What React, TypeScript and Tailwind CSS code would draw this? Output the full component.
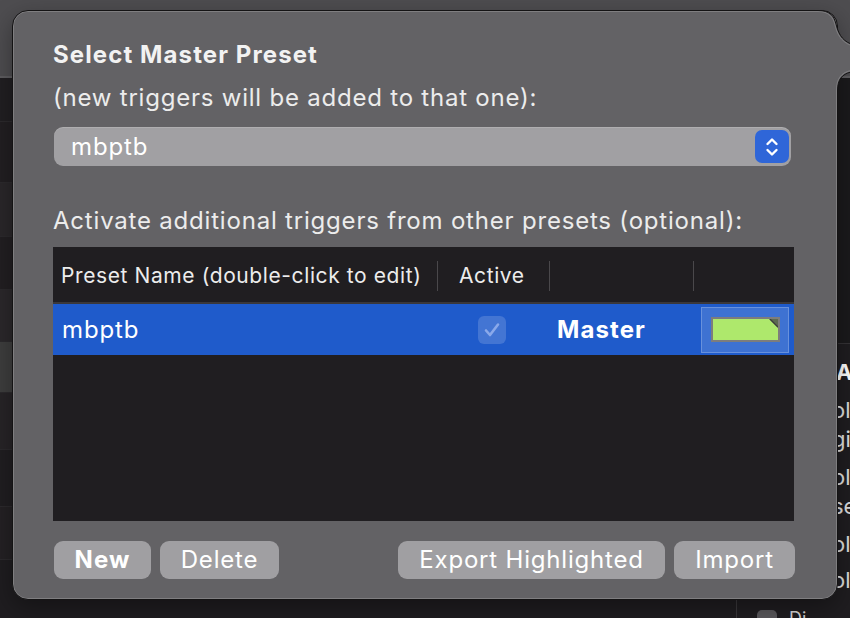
import React from "react";

const leftRows: { h: number; c: string }[] = [
  { h: 44, c: "#211f22" },
  { h: 61, c: "#221f22" },
  { h: 54, c: "#2a272a" },
  { h: 53, c: "#221f22" },
  { h: 52, c: "#2b282b" },
  { h: 51, c: "#3e3e3e" },
  { h: 57, c: "#272427" },
  { h: 57, c: "#201e21" },
  { h: 53, c: "#242124" },
];

function Stepper() {
  return (
    <div className="w-[34px] h-[33px] rounded-[7px] bg-[#2f66d8] flex items-center justify-center">
      <svg width="16" height="24" viewBox="0 0 16 24" fill="none">
        <path d="M3.5 9 L8 4.5 L12.5 9" stroke="white" strokeWidth="2.4" strokeLinecap="round" strokeLinejoin="round" />
        <path d="M3.5 15 L8 19.5 L12.5 15" stroke="white" strokeWidth="2.4" strokeLinecap="round" strokeLinejoin="round" />
      </svg>
    </div>
  );
}

function Btn({ label, bold, w }: { label: string; bold?: boolean; w: string }) {
  return (
    <div
      className={`${w} h-[38px] rounded-[9px] bg-[#a09fa2] flex items-center justify-center text-[24px] text-white ${
        bold ? "font-bold tracking-[1.1px]" : "tracking-[0.8px]"
      }`}
    >
      {label}
    </div>
  );
}

export default function App() {
  return (
    <div className="relative w-[850px] h-[618px] overflow-hidden bg-[#1f1d20] font-['Inter',sans-serif]">
      {/* background window */}
      <div className="h-[78px] bg-[#4e4d50] border-b-2 border-[#5e5d60]" />
      <div className="flex h-[540px]">
        <div className="w-[737px] shrink-0 flex flex-col border-r border-[#3a383b]">
          {leftRows.map((r, i) => (
            <div key={i} className="border-b border-[#2c2a2d]" style={{ height: r.h, background: r.c }} />
          ))}
        </div>
        <div className="flex-1 flex flex-col">
          <div className="h-[266px] bg-[#1b1a1c] border-b border-[#353336]" />
          <div className="pl-[95px] pt-[14px] text-[22px] leading-[29px] text-[#e0e0e0] whitespace-nowrap">
            <div className="font-bold text-white pl-[4px]">A</div>
            <div className="mt-[9px]">ol</div>
            <div>gi</div>
            <div className="mt-[9px]">ol</div>
            <div>se</div>
            <div className="mt-[9px]">ol</div>
            <div className="mt-[7px]">ol</div>
          </div>
          <div className="mt-auto flex items-start gap-[12px] pl-[20px] h-[8px]">
            <div className="w-[20px] h-[12px] rounded-t-[5px] bg-[#5a585c]" />
            <div className="text-[18px] leading-[18px] text-[#d8d8d8]">Di</div>
          </div>
        </div>
      </div>

      {/* popover */}
      <div className="absolute left-[12px] top-[10px] w-[826px] h-[590px] rounded-[16px] border border-[#141314] bg-[#636265] shadow-[inset_0_0_0_1px_rgba(255,255,255,0.18),0_8px_24px_rgba(0,0,0,0.35)]">
        <div className="flex flex-col pl-[40px] pr-[42px] pt-[29px]">
          <div className="h-[30px] leading-[30px] text-[24px] font-bold text-[#f2f2f2] tracking-[1.1px]">
            Select Master Preset
          </div>
          <div className="mt-[13px] h-[30px] leading-[30px] text-[24px] tracking-[0.78px] text-[#ececec]">
            (new triggers will be added to that one):
          </div>
          <div className="mt-[14px] ml-[1px] mr-[4px] h-[39px] rounded-[9px] bg-[#a1a0a3] flex items-center justify-between pl-[17px] pr-[2px] shadow-[inset_0_1px_0_rgba(255,255,255,0.15)]">
            <span className="text-[24px] tracking-[0.9px] text-white">mbptb</span>
            <Stepper />
          </div>
          <div className="mt-[40px] h-[30px] leading-[30px] text-[24px] tracking-[0.8px] text-[#ececec]">
            Activate additional triggers from other presets (optional):
          </div>
          <div className="mt-[11px] h-[274px] w-[741px] bg-[#201e21] flex flex-col">
            <div className="h-[55px] pt-[3px] grid grid-cols-[385px_112px_144px_100px] items-center text-[21px] tracking-[0.6px] text-[#ececec]">
              <div className="pl-[8px] h-[30px] leading-[30px] border-r border-[#4a484b]">Preset Name (double-click to edit)</div>
              <div className="pl-[21px] h-[30px] leading-[30px] border-r border-[#4a484b]">Active</div>
              <div className="h-[30px] border-r border-[#4a484b]" />
              <div className="h-[30px]" />
            </div>
            <div className="h-[2px] bg-[#3a383b]" />
            <div className="h-[51px] bg-[#1f5bcb] grid grid-cols-[385px_112px_144px_100px] items-center">
              <div className="pl-[9px] text-[24px] tracking-[0.9px] text-white">mbptb</div>
              <div className="flex justify-center pr-[4px]">
                <div className="w-[28px] h-[28px] rounded-[6px] bg-[rgba(255,255,255,0.16)] flex items-center justify-center">
                  <svg width="20" height="20" viewBox="0 0 20 20" fill="none">
                    <path d="M4 10.5 L8 15 L16 4.5" stroke="#8aa9ea" strokeWidth="2.6" strokeLinecap="round" strokeLinejoin="round" />
                  </svg>
                </div>
              </div>
              <div className="pl-[7px] text-[24px] font-bold tracking-[1.1px] text-white">Master</div>
              <div className="flex justify-start pl-[7px]">
                <div className="w-[88px] h-[46px] bg-[rgba(255,255,255,0.14)] border border-[rgba(255,255,255,0.22)] flex items-center justify-center">
                  <div className="relative w-[69px] h-[25px] border-2 border-[#7d7d7d] bg-[#aee86c]">
                    <svg className="absolute right-0 top-0" width="9" height="9" viewBox="0 0 9 9">
                      <path d="M0 0 L9 0 L9 9 Z" fill="#5c6b50" />
                      <path d="M1 0 L9 8" stroke="#3b3b3b" strokeWidth="1.2" />
                    </svg>
                  </div>
                </div>
              </div>
            </div>
          </div>
          <div className="mt-[20px] flex items-center pl-[1px]">
            <Btn label="New" bold w="w-[97px]" />
            <div className="ml-[9px]">
              <Btn label="Delete" w="w-[119px]" />
            </div>
            <div className="ml-auto">
              <Btn label="Export Highlighted" w="w-[267px]" />
            </div>
            <div className="ml-[9px]">
              <Btn label="Import" w="w-[121px]" />
            </div>
          </div>
        </div>
      </div>

      {/* popover arrow (top-right) */}
      <svg className="absolute left-[800px] top-0" width="50" height="110" viewBox="800 0 50 110">
        <path
          d="M800 10.5 L818 10.5 C830 10.5 834 16 836 24 C838 32 841 40 851 44 L851 72 C842 74 837.5 80 837.5 90 L837.5 110 L800 110 Z"
          fill="#636265"
        />
        <path
          d="M800 10.5 L818 10.5 C830 10.5 834 16 836 24 C838 32 841 40 851 44 M851 72 C842 74 837.5 80 837.5 90 L837.5 110"
          fill="none"
          stroke="#141314"
          strokeWidth="1"
        />
        <path
          d="M800 11.5 L818 11.5 C829 11.5 833 17 835 25 C837 33 840 41 851 45.5 M851 70.5 C841 72.5 836.5 79 836.5 90 L836.5 110"
          fill="none"
          stroke="rgba(255,255,255,0.18)"
          strokeWidth="1"
        />
      </svg>
    </div>
  );
}
